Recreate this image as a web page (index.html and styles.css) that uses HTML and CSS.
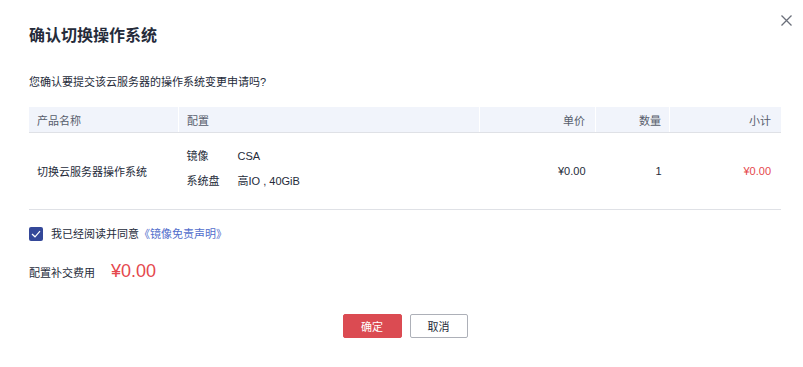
FILE: index.html
```html
<!DOCTYPE html>
<html lang="zh-CN">
<head>
    <meta charset="UTF-8">
    <title>确认切换操作系统</title>
    <link rel="stylesheet" href="styles.css">
</head>
<body>

    <div class="dialog">
        <span class="close">
            <svg width="11" height="11" viewBox="0 0 11 11"><path d="M0.5 0.5 L10.5 10.5 M10.5 0.5 L0.5 10.5" stroke="#6a6f7a" stroke-width="1.3" fill="none"/></svg>
        </span>

        <div class="title">确认切换操作系统</div>
        <div class="desc">您确认要提交该云服务器的操作系统变更申请吗?</div>

        <table class="order">
            <thead>
                <tr>
                    <th class="c-name">产品名称</th>
                    <th class="c-conf">配置</th>
                    <th class="c-price num">单价</th>
                    <th class="c-qty num">数量</th>
                    <th class="c-sum num">小计</th>
                </tr>
            </thead>
            <tbody>
                <tr>
                    <td>切换云服务器操作系统</td>
                    <td class="conf">
                        <div class="conf-line"><span class="conf-key">镜像</span><span>CSA</span></div>
                        <div class="conf-line"><span class="conf-key">系统盘</span><span>高IO , 40GiB</span></div>
                    </td>
                    <td class="num">¥0.00</td>
                    <td class="num qty">1</td>
                    <td class="num red">¥0.00</td>
                </tr>
            </tbody>
        </table>

        <label class="agree">
            <span class="check">
                <svg width="10" height="8" viewBox="0 0 10 8"><path d="M1 4 L4 6.8 L9 1.2" stroke="#fff" stroke-width="1.2" fill="none"/></svg>
            </span>
            我已经阅读并同意<a href="#">《镜像免责声明》</a>
        </label>

        <div class="fee">
            <span class="fee-label">配置补交费用</span>
            <span class="fee-amount">¥0.00</span>
        </div>

        <div class="actions">
            <button class="btn btn-ok">确定</button>
            <button class="btn btn-cancel">取消</button>
        </div>
    </div>

</body>
</html>
```

FILE: styles.css
```css
body {
    margin: 0;
    padding: 0;
    background: #fff;
    font-family: "Liberation Sans", "Noto Sans CJK SC", sans-serif;
    font-size: 11px;
    color: #252b3a;
}

.dialog {
    position: relative;
    width: 752px;
    padding: 24px 22px 0 29px;
}

.close {
    position: absolute;
    top: 15px;
    right: 11px;
    width: 11px;
    height: 11px;
    line-height: 0;
}

.title {
    font-size: 16px;
    font-weight: bold;
    line-height: 24px;
    color: #252b3a;
}

.desc {
    margin-top: 25px;
    line-height: 18px;
    color: #252b3a;
}

.order {
    width: 752px;
    margin-top: 16px;
    border-collapse: collapse;
    table-layout: fixed;
}

.order th {
    height: 25px;
    padding: 0 8px;
    background: #f1f4fb;
    font-weight: normal;
    color: #575d6c;
    text-align: left;
    border-left: 1px solid #fff;
    border-bottom: 1px solid #dfe1e6;
}

.order th:first-child {
    border-left: none;
}

.order td {
    height: 76px;
    padding: 0 8px;
    color: #252b3a;
    border-bottom: 1px solid #dfe1e6;
}

.c-name { width: 133px; }
.c-conf { width: 284px; }
.c-price { width: 97px; }
.c-qty { width: 57px; }

.order .num {
    text-align: right;
    padding-right: 10px;
}

.order .qty,
.order th.c-qty {
    padding-right: 8px;
}

.order .red {
    color: #e5484d;
}

.conf-line {
    display: flex;
    line-height: 25px;
}

.conf-line:first-child {
    margin-top: -4px;
}

.conf-key {
    width: 51px;
}

.agree {
    display: flex;
    align-items: center;
    margin-top: 16px;
    line-height: 16px;
    color: #252b3a;
}

.agree a {
    color: #526ecc;
    text-decoration: none;
}

.check {
    display: flex;
    justify-content: center;
    align-items: center;
    width: 14px;
    height: 14px;
    margin-right: 8px;
    border-radius: 2px;
    background: #344899;
}

.fee {
    display: flex;
    align-items: center;
    margin-top: 19px;
}

.fee-label {
    width: 82px;
}

.fee-amount {
    font-size: 18px;
    color: #e5484d;
}

.actions {
    display: flex;
    justify-content: center;
    gap: 8px;
    margin-top: 32px;
}

.btn {
    height: 24px;
    padding: 0;
    border-radius: 2px;
    font-family: "Liberation Sans", "Noto Sans CJK SC", sans-serif;
    font-size: 11px;
    cursor: pointer;
}

.btn-ok {
    width: 59px;
    border: 1px solid #db4b52;
    background: #db4b52;
    color: #fff;
}

.btn-cancel {
    width: 58px;
    border: 1px solid #adb0b8;
    background: #fff;
    color: #252b3a;
}
```
